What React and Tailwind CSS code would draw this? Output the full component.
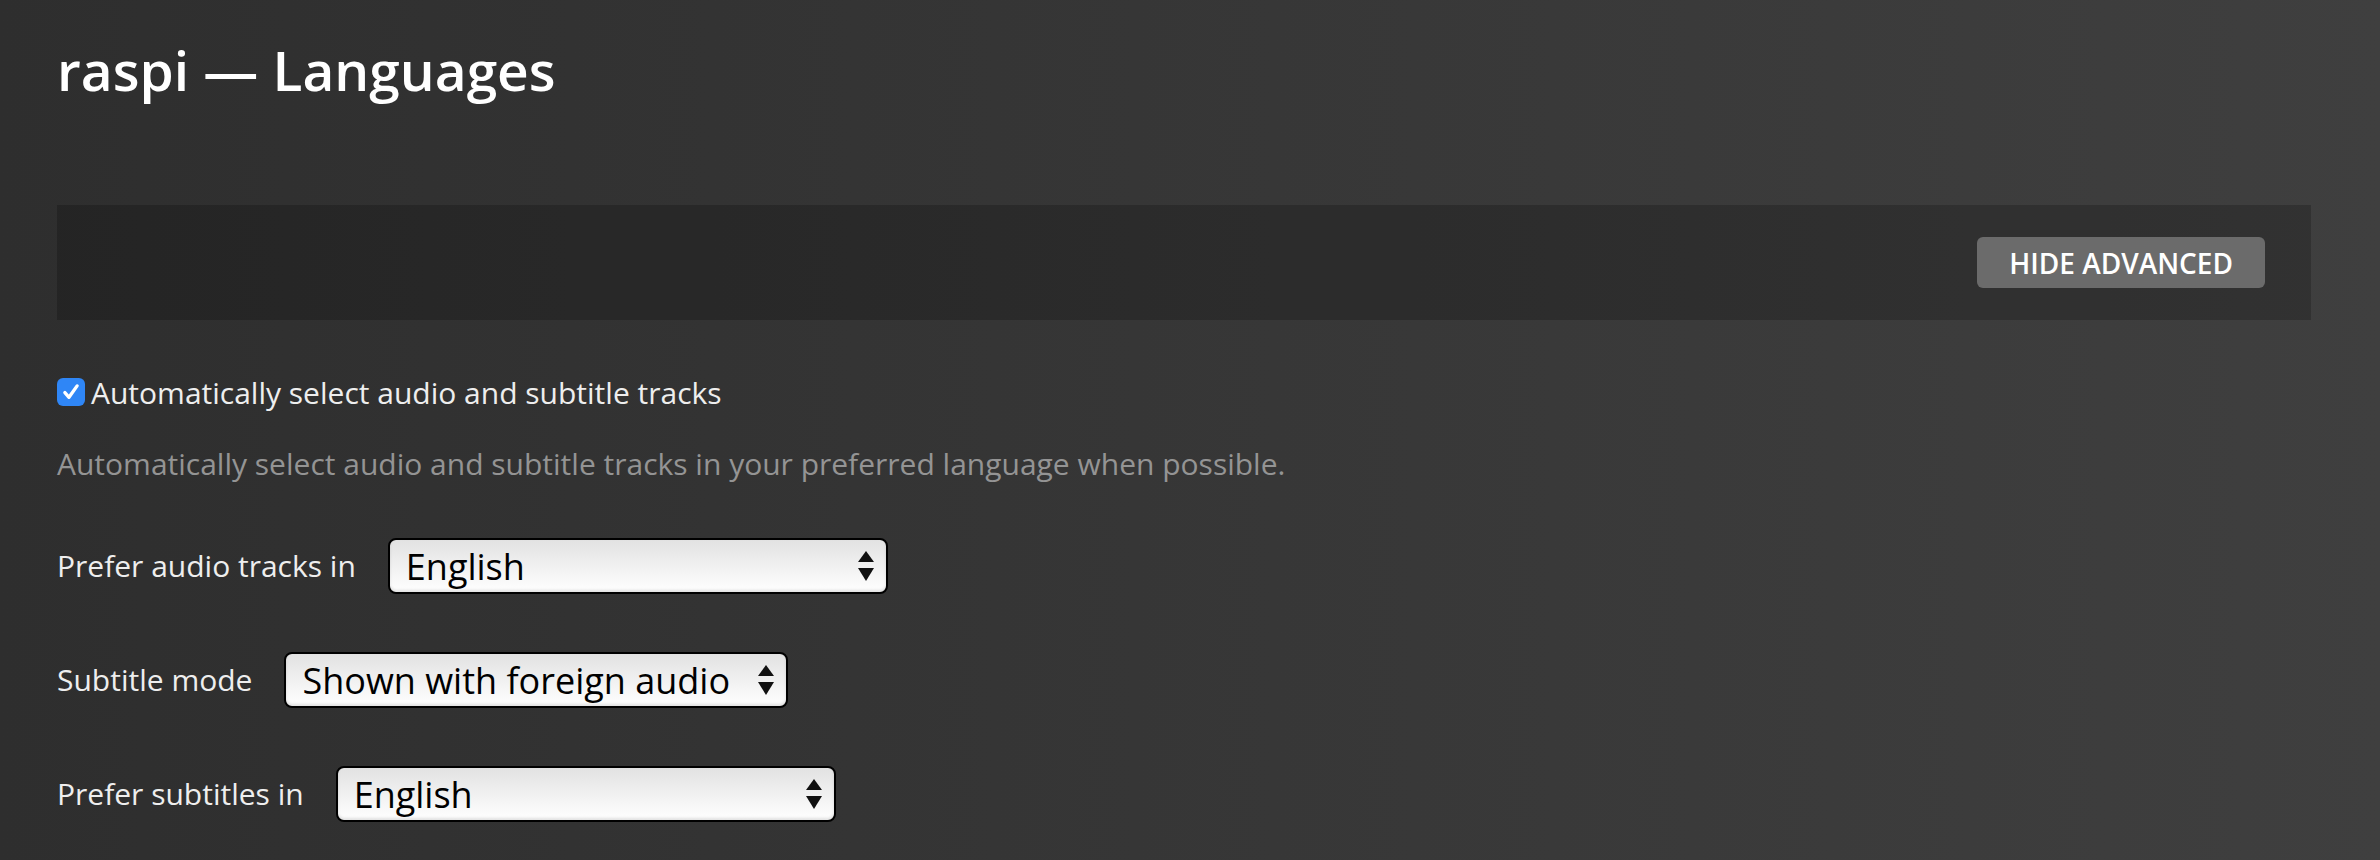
import React, { useState } from 'react';

const font = { fontFamily: '"Open Sans", "Noto Sans", sans-serif' };

function Stepper() {
    return (
        <svg width="16" height="30" viewBox="0 0 16 30" className="pointer-events-none absolute right-[14px] top-1/2 -translate-y-1/2">
            <path d="M8 0 L16 11 L0 11 Z" fill="#111" />
            <path d="M0 17 L16 17 L8 30 Z" fill="#111" />
        </svg>
    );
}

function PrefSelect({ label, value, options, onChange, width = 'w-[500px]' }) {
    return (
        <div className="flex flex-row items-center gap-8 h-[57px]">
            <label className="text-[30px] text-[#eeeeee]">{label}</label>
            <div className="relative">
                <select
                    value={value}
                    onChange={(e) => onChange(e.target.value)}
                    className={`appearance-none ${width} h-[56px] pl-[16px] pr-12 text-[36px] text-black border-2 border-black rounded-[8px] bg-linear-to-b from-[#e2e2e2] to-[#ffffff] shadow-[inset_0_-2px_3px_rgba(0,0,0,0.12)] outline-none`}
                    style={font}
                >
                    {options.map((o) => (
                        <option key={o} value={o}>{o}</option>
                    ))}
                </select>
                <Stepper />
            </div>
        </div>
    );
}

export default function App() {
    const [autoSelect, setAutoSelect] = useState(true);
    const [audioLang, setAudioLang] = useState('English');
    const [subMode, setSubMode] = useState('Shown with foreign audio');
    const [subLang, setSubLang] = useState('English');

    const languages = ['English', 'French', 'German', 'Spanish', 'Japanese'];

    return (
        <main className="min-h-screen h-[860px] bg-linear-to-r from-[#2e2e2e] to-[#3f3f3f] pl-[57px] pr-[69px] pt-8 overflow-hidden" style={font}>
            <h1 className="text-[55px] leading-[76px] font-semibold text-white">raspi — Languages</h1>

            <section className="flex flex-row justify-end items-center h-[115px] mt-[97px] pr-[46px] bg-black/20">
                <button className="h-[51px] px-[32px] rounded-[6px] bg-[#6b6b6b] text-white text-[28px] font-semibold leading-none">
                    HIDE ADVANCED
                </button>
            </section>

            <div className="flex flex-row items-center h-[40px] mt-[52px]">
                <button
                    onClick={() => setAutoSelect(!autoSelect)}
                    className={`w-[28px] h-[28px] rounded-[6px] flex items-center justify-center ${autoSelect ? 'bg-[#2f86f6]' : 'bg-white border border-gray-400'}`}
                >
                    {autoSelect && (
                        <svg width="20" height="20" viewBox="0 0 18 18" fill="none">
                            <path d="M3.5 9.5 L7.2 13.8 L14.5 3.5" stroke="white" strokeWidth="3" strokeLinecap="round" strokeLinejoin="round" />
                        </svg>
                    )}
                </button>
                <span className="ml-[6px] text-[30px] text-[#eeeeee]">Automatically select audio and subtitle tracks</span>
            </div>

            <p className="mt-8 h-[40px] leading-[40px] text-[30px] text-[#949494]">
                Automatically select audio and subtitle tracks in your preferred language when possible.
            </p>

            <div className="flex flex-col gap-[57px] mt-[53px]">
                <PrefSelect label="Prefer audio tracks in" value={audioLang} options={languages} onChange={setAudioLang} />
                <PrefSelect
                    label="Subtitle mode"
                    value={subMode}
                    options={['Manually selected', 'Shown with foreign audio', 'Always enabled']}
                    onChange={setSubMode}
                    width="w-[504px]"
                />
                <PrefSelect label="Prefer subtitles in" value={subLang} options={languages} onChange={setSubLang} />
            </div>
        </main>
    );
}
